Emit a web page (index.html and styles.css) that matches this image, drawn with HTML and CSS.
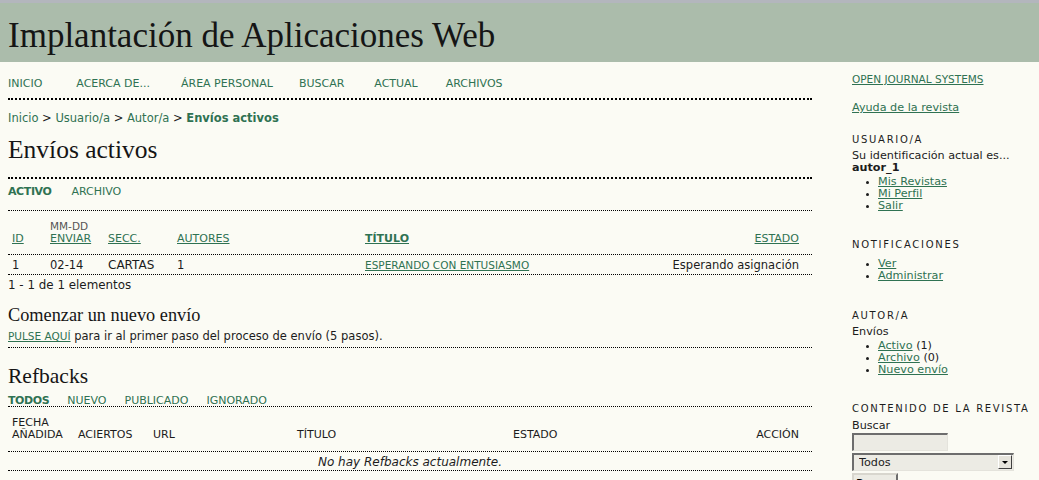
FILE: index.html
```html
<!DOCTYPE html>
<html lang="es">
<head>
<meta charset="utf-8">
<title>Envíos activos</title>
<link rel="stylesheet" href="styles.css">
</head>
<body>
<div class="strip"></div>
<header class="header"><h1 class="site-title">Implantación de Aplicaciones Web</h1></header>
<div class="layout">
  <main class="main">
    <ul class="navbar">
      <li><a href="#">Inicio</a></li>
      <li><a href="#">Acerca de...</a></li>
      <li><a href="#">Área personal</a></li>
      <li><a href="#">Buscar</a></li>
      <li><a href="#">Actual</a></li>
      <li><a href="#">Archivos</a></li>
    </ul>
    <div class="breadcrumb"><a href="#">Inicio</a> &gt; <a href="#">Usuario/a</a> &gt; <a href="#">Autor/a</a> &gt; <a href="#" class="current">Envíos activos</a></div>
    <h2 class="page-title">Envíos activos</h2>
    <div class="sep-thick"></div>
    <ul class="menu menu-first">
      <li class="current"><a href="#">Activo</a></li>
      <li><a href="#">Archivo</a></li>
    </ul>
    <div class="sep"></div>
    <table class="listing subs">
      <colgroup><col class="c1"><col class="c2"><col class="c3"><col class="c4"><col class="c5"><col></colgroup>
      <tr class="heading">
        <td><a href="#">ID</a></td>
        <td><span class="small">MM-DD</span><br><a href="#">Enviar</a></td>
        <td><a href="#">Secc.</a></td>
        <td><a href="#">Autores</a></td>
        <td><a href="#" class="sorted">Título</a></td>
        <td class="right"><a href="#">Estado</a></td>
      </tr>
      <tr><td colspan="6" class="hsep"></td></tr>
      <tr class="row">
        <td>1</td>
        <td>02-14</td>
        <td class="big">CARTAS</td>
        <td>1</td>
        <td><a href="#" class="upper">Esperando con entusiasmo</a></td>
        <td class="right">Esperando asignación</td>
      </tr>
      <tr><td colspan="6" class="hsep"></td></tr>
    </table>
    <div class="count">1 - 1 de 1 elementos</div>
    <h3 class="sub-title">Comenzar un nuevo envío</h3>
    <p class="para"><a href="#" class="upper">Pulse aquí</a> para ir al primer paso del proceso de envío (5 pasos).</p>
    <div class="sep"></div>
    <h2 class="ref-title">Refbacks</h2>
    <ul class="menu menu-ref">
      <li class="current"><a href="#">Todos</a></li>
      <li><a href="#">Nuevo</a></li>
      <li><a href="#">Publicado</a></li>
      <li><a href="#">Ignorado</a></li>
    </ul>
    <table class="listing refs">
      <colgroup><col class="r1"><col class="r2"><col class="r3"><col class="r4"><col class="r5"><col></colgroup>
      <tr class="heading">
        <td>Fecha<br>añadida</td>
        <td>Aciertos</td>
        <td>URL</td>
        <td>Título</td>
        <td>Estado</td>
        <td class="right">Acción</td>
      </tr>
      <tr><td colspan="6" class="hsep"></td></tr>
      <tr class="empty">
        <td colspan="6">No hay Refbacks actualmente.</td>
      </tr>
      <tr><td colspan="6" class="hsep"></td></tr>
    </table>
  </main>
  <aside class="sidebar">
    <div class="sb-link"><a href="#" class="upper">Open Journal Systems</a></div>
    <div class="sb-help"><a href="#">Ayuda de la revista</a></div>

    <div class="block block-user">
      <div class="block-title">Usuario/a</div>
      <div class="line">Su identificación actual es...</div>
      <div class="line bold">autor_1</div>
      <ul class="sb-list">
        <li><a href="#">Mis Revistas</a></li>
        <li><a href="#">Mi Perfil</a></li>
        <li><a href="#">Salir</a></li>
      </ul>
    </div>

    <div class="block block-notif">
      <div class="block-title">Notificaciones</div>
      <ul class="sb-list">
        <li><a href="#">Ver</a></li>
        <li><a href="#">Administrar</a></li>
      </ul>
    </div>

    <div class="block block-author">
      <div class="block-title">Autor/a</div>
      <div class="line">Envíos</div>
      <ul class="sb-list">
        <li><a href="#">Activo</a> (1)</li>
        <li><a href="#">Archivo</a> (0)</li>
        <li><a href="#">Nuevo envío</a></li>
      </ul>
    </div>

    <div class="block block-search">
      <div class="block-title">Contenido de la revista</div>
      <div class="line">Buscar</div>
      <input class="field" type="text" aria-label="Buscar">
      <div class="select-wrap">
        <select class="select" aria-label="Ámbito"><option>Todos</option></select>
        <span class="select-btn"><span class="tri"></span></span>
      </div>
      <button class="btn" type="button">Buscar</button>
    </div>
  </aside>
</div>
</body>
</html>
```

FILE: styles.css
```css
html, body {
  margin: 0;
  padding: 0;
}
body {
  background: #fbfbf4;
  color: #1c1c1c;
  font-family: "DejaVu Sans", Verdana, sans-serif;
  font-size: 11.2px;
  line-height: 14px;
  overflow: hidden;
  height: 480px;
}
a {
  color: #2f7252;
  text-decoration: underline;
}
ul {
  margin: 0;
  padding: 0;
  list-style: none;
}
h1, h2, h3, p {
  margin: 0;
  font-weight: normal;
}

.strip {
  height: 3px;
  background: #b3b6bd;
}
.header {
  background: #abbcab;
  height: 59px;
  padding-left: 8px;
}
.site-title {
  font-family: "Liberation Serif", "Times New Roman", serif;
  font-size: 35px;
  line-height: 40px;
  padding-top: 13px;
  color: #151515;
}

.layout {
  display: flex;
  align-items: flex-start;
}
.main {
  width: 804px;
  margin-left: 8px;
  flex: none;
  font-size: 11.5px;
}
.sidebar {
  margin-left: 40px;
  width: 186px;
  flex: none;
}

/* nav */
.navbar {
  display: flex;
  padding-top: 14px;
  padding-bottom: 7px;
  border-bottom: 2px dotted #000;
  line-height: 14px;
}
.navbar li:nth-child(1) { margin-right: 34px; }
.navbar li:nth-child(2) { margin-right: 31px; }
.navbar li:nth-child(3) { margin-right: 26px; }
.navbar li:nth-child(4) { margin-right: 30px; }
.navbar li:nth-child(5) { margin-right: 28px; }
.navbar a {
  text-decoration: none;
  text-transform: uppercase;
  font-size: 11px;
}

.breadcrumb {
  margin-top: 11px;
  line-height: 14px;
}
.breadcrumb a {
  text-decoration: none;
}
.breadcrumb .current {
  font-weight: bold;
}

.page-title {
  font-family: "Liberation Serif", "Times New Roman", serif;
  font-size: 25.5px;
  line-height: 28px;
  margin-top: 11px;
  color: #151515;
}
.sep-thick {
  margin-top: 13px;
  border-top: 2px dotted #000;
}
.sep {
  border-top: 1px dotted #000;
}

.menu {
  display: flex;
  line-height: 14px;
}
.menu li {
  margin-right: 20px;
}
.menu a {
  text-decoration: none;
  text-transform: uppercase;
  font-size: 11px;
}
.menu li.current a {
  font-weight: bold;
  letter-spacing: -0.4px;
}
.menu-first {
  margin-top: 5px;
  margin-bottom: 11px;
}

/* tables */
.listing {
  width: 804px;
  border-collapse: separate;
  border-spacing: 0;
  table-layout: fixed;
}
.listing td {
  padding: 0 4px;
  vertical-align: bottom;
  text-align: left;
  border: 0;
}
.listing td.right {
  text-align: right;
  padding-right: 13px;
}
.listing td.hsep {
  padding: 0;
  height: 0;
  font-size: 0;
  line-height: 0;
  border-top: 1px dotted #000;
}
.listing .heading td {
  text-transform: uppercase;
  font-size: 11px;
  line-height: 12px;
  padding-top: 9px;
  padding-bottom: 9px;
}
.listing .heading .small {
  color: #555;
  font-size: 10.5px;
}
.subs .c1 { width: 38px; }
.subs .c2 { width: 58px; }
.subs .c3 { width: 69px; }
.subs .c4 { width: 188px; }
.subs .c5 { width: 300px; }
.sorted {
  font-weight: bold;
}
.upper {
  text-transform: uppercase;
}
.listing .row td {
  padding-top: 3px;
  padding-bottom: 2px;
  line-height: 14px;
}
.listing .row td.big {
  font-size: 12px;
}
.listing .row .upper {
  font-size: 10.5px;
}

.count {
  margin-top: 3px;
  font-size: 11.9px;
}
.sub-title {
  font-family: "Liberation Serif", "Times New Roman", serif;
  font-size: 18.3px;
  line-height: 22px;
  margin-top: 12px;
  color: #151515;
}
.para {
  margin-top: 3px;
  margin-bottom: 4px;
}
.para .upper {
  font-size: 10.5px;
}
.ref-title {
  font-family: "Liberation Serif", "Times New Roman", serif;
  font-size: 21.5px;
  line-height: 24px;
  margin-top: 16px;
  color: #151515;
}
.menu-ref {
  margin-top: 7px;
  line-height: 11px;
  border-bottom: 1px dotted #000;
}
.menu-ref li {
  margin-right: 18px;
}
.refs .r1 { width: 66px; }
.refs .r2 { width: 75px; }
.refs .r3 { width: 144px; }
.refs .r4 { width: 216px; }
.refs .r5 { width: 200px; }
.refs .heading td {
  color: #1c1c1c;
  padding-top: 10px;
  padding-bottom: 10px;
}
.listing .empty td {
  text-align: center;
  font-style: italic;
  font-size: 12px;
  padding-top: 3px;
  padding-bottom: 1px;
}

/* sidebar */
.sb-link {
  margin-top: 10px;
  line-height: 14px;
}
.sb-link a {
  font-size: 10.5px;
}
.sb-help {
  margin-top: 14px;
  line-height: 14px;
}
.block {
  line-height: 12px;
}
.block-title {
  text-transform: uppercase;
  font-size: 10px;
  letter-spacing: 0.17em;
  line-height: 14px;
  margin-bottom: 3px;
  color: #1c1c1c;
}
.block-user { margin-top: 18px; }
.block-notif { margin-top: 26px; }
.block-author { margin-top: 27px; }
.block-search { margin-top: 26px; }
.block-search .block-title { margin-bottom: 4px; }
.block .bold {
  font-weight: bold;
}
.sb-list {
  list-style: disc;
  padding-left: 26px;
  margin-top: 2px;
}
.sb-list li::marker {
  font-size: 9px;
}
.block-notif .block-title { margin-bottom: 6px; }

.field {
  display: block;
  box-sizing: border-box;
  width: 96px;
  height: 18px;
  margin: 1px 0 2px;
  padding: 0;
  background: #ecebe4;
  border-style: solid;
  border-width: 2px 1px 1px 2px;
  border-color: #6d6d6d #e4e3dc #e4e3dc #6d6d6d;
}
.select-wrap {
  position: relative;
  width: 162px;
  height: 18px;
}
.select {
  display: block;
  box-sizing: border-box;
  width: 162px;
  height: 18px;
  margin: 0;
  padding: 0 0 0 5px;
  appearance: none;
  -webkit-appearance: none;
  background: #ecebe4;
  border-style: solid;
  border-width: 2px 1px 1px 2px;
  border-color: #6d6d6d #e4e3dc #e4e3dc #6d6d6d;
  border-radius: 0;
  font-family: "DejaVu Sans", Verdana, sans-serif;
  font-size: 11.2px;
  color: #1c1c1c;
}
.select-btn {
  position: absolute;
  right: 2px;
  top: 2px;
  width: 14px;
  height: 14px;
  box-sizing: border-box;
  background: #e6e4dc;
  border-style: solid;
  border-width: 1px;
  border-color: #fff #404040 #404040 #fff;
  display: flex;
  align-items: center;
  justify-content: center;
}
.tri {
  width: 0;
  height: 0;
  border-left: 3px solid transparent;
  border-right: 3px solid transparent;
  border-top: 3px solid #000;
}
.btn {
  display: block;
  margin-top: 2px;
  width: 46px;
  height: 20px;
  background: #ecebe4;
  border-style: solid;
  border-width: 2px;
  border-color: #d8d6ce #6d6d6d #6d6d6d #d8d6ce;
  font-family: "DejaVu Sans", Verdana, sans-serif;
  font-size: 11.2px;
  padding: 0;
}
```
